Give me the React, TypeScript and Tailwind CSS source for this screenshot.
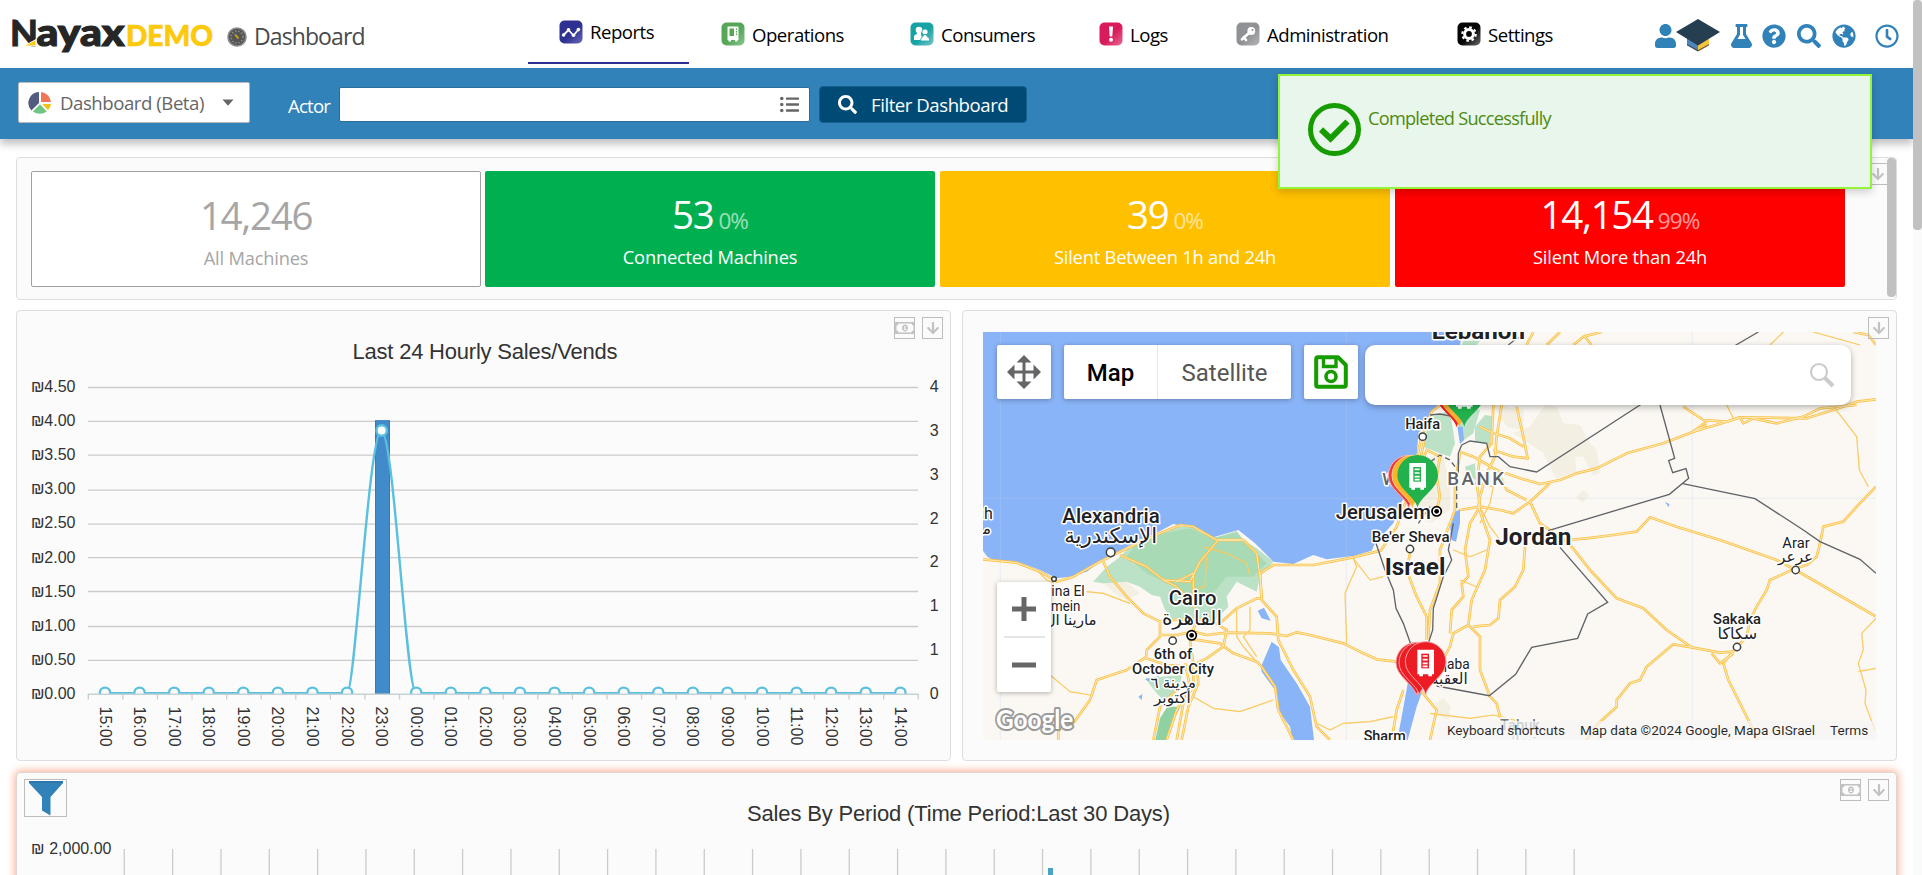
import React from "react";
import {
  FaUser,
  FaFlask,
  FaQuestionCircle,
  FaSearch,
  FaGlobeAmericas,
  FaRegClock,
  FaListUl,
  FaRegMoneyBillAlt,
  FaArrowDown,
} from "react-icons/fa";

/* ---------- header ---------- */

function Logo() {
  return (
    <svg width="204" height="50" viewBox="10 9 204 50" className="shrink-0 overflow-visible">
      <g fontFamily="Lato, sans-serif" fontWeight="900">
        <text x="10" y="46" fontSize="36" fill="#262626" stroke="#262626" strokeWidth="0.8" textLength="28" lengthAdjust="spacingAndGlyphs">N</text>
        <text x="36.5" y="45.6" fontSize="38" fill="#262626" stroke="#262626" strokeWidth="1.2" textLength="88" lengthAdjust="spacingAndGlyphs">ayax</text>
        <text x="126" y="46" fontSize="28.5" fill="#fdc90d" stroke="#fdc90d" strokeWidth="0.7" textLength="87" lengthAdjust="spacingAndGlyphs">DEMO</text>
      </g>
      <path d="M24 46 L36 39.5 V46 Z" fill="#fdc90d" stroke="#fff" strokeWidth="1" />
    </svg>
  );
}

function Gauge() {
  return (
    <svg width="20" height="20" viewBox="0 0 20 20" className="shrink-0">
      <circle cx="10" cy="10" r="9" fill="#555" stroke="#8b8b8b" strokeWidth="1.6" />
      <circle cx="10" cy="10" r="6" fill="none" stroke="#8d8d8d" strokeWidth="1.5" strokeDasharray="1.4 1.8" />
      <path d="M8 7.5 L11.5 11.5" stroke="#d9a916" strokeWidth="1.6" />
    </svg>
  );
}

type Glyph = "reports" | "operations" | "consumers" | "logs" | "admin" | "settings";

const glyphColors: Record<Glyph, [string, string]> = {
  reports: ["#2e3192", "#6a68b5"],
  operations: ["#55a657", "#8cc490"],
  consumers: ["#17a2a4", "#7cc8cc"],
  logs: ["#d91a5b", "#e56d92"],
  admin: ["#8f9194", "#b4b6b8"],
  settings: ["#050505", "#6c6c6c"],
};

function NavGlyph({ name }: { name: Glyph }) {
  const [base, light] = glyphColors[name];
  return (
    <svg width="24" height="24" viewBox="0 0 24 24" className="shrink-0">
      <defs>
        <linearGradient id={"g-" + name} x1="0.3" y1="0.3" x2="1" y2="1">
          <stop offset="0.35" stopColor={base} />
          <stop offset="1" stopColor={light} />
        </linearGradient>
      </defs>
      <rect x="0.5" y="0.5" width="23" height="23" rx="5" fill={"url(#g-" + name + ")"} />
      {name === "reports" && (
        <g fill="#fff">
          <path d="M4.5 15 L9.5 10 L14.5 15.5 L19.5 9.5" stroke="#fff" strokeWidth="1.8" fill="none" />
          <circle cx="4.6" cy="15" r="1.8" />
          <circle cx="9.5" cy="9.8" r="1.8" />
          <circle cx="14.5" cy="15.3" r="1.8" />
          <circle cx="19.4" cy="9.6" r="1.8" />
        </g>
      )}
      {name === "operations" && (
        <g>
          <path d="M6.5 4.5 H17.5 V18 H16.5 V19.5 H14 V18 H10 V19.5 H7.5 V18 H6.5 Z" fill="#fff" />
          <rect x="8.5" y="6.5" width="4.5" height="7.5" fill={base} />
          <path d="M15.5 6.5 V14" stroke={base} strokeWidth="1.3" strokeDasharray="1.5 1" />
        </g>
      )}
      {name === "consumers" && (
        <g fill="#fff">
          <circle cx="9" cy="8" r="3.3" />
          <path d="M4 18 V15 Q4 12.5 7 12 L7 9 H11 V12 L12.5 18 Z" />
          <g stroke={base} strokeWidth="0.8">
            <circle cx="15" cy="10" r="3.1" />
            <path d="M10.5 19 Q10.5 15.5 13.2 14.2 L13.5 12.5 H16.5 L16.8 14.2 Q20 15.5 20 19 Z" />
          </g>
        </g>
      )}
      {name === "logs" && (
        <g fill="#fff">
          <path d="M10 4.5 H14 L13.3 14.5 H10.7 Z" />
          <circle cx="12" cy="17.7" r="2" />
        </g>
      )}
      {name === "admin" && (
        <g>
          <circle cx="15.3" cy="9" r="3.9" fill="#fff" />
          <circle cx="16.5" cy="8" r="1" fill={base} />
          <path d="M13.3 10.8 L6 17.3 M7.8 15.2 L10 18" stroke="#fff" strokeWidth="2.6" strokeLinecap="round" />
        </g>
      )}
      {name === "settings" && (
        <g fill="none" stroke="#fff">
          <circle cx="12" cy="12" r="4.4" strokeWidth="3" />
          <circle cx="12" cy="12" r="6.7" strokeWidth="2.2" strokeDasharray="2.6 2.66" />
        </g>
      )}
    </svg>
  );
}

function NavItem({ glyph, label, className }: { glyph: Glyph; label: string; className: string }) {
  return (
    <div className={"flex shrink-0 items-center whitespace-nowrap text-[18.6px] tracking-[-0.5px] text-black " + className}>
      <NavGlyph name={glyph} />
      <span className="ml-[7px]">{label}</span>
    </div>
  );
}

function GradCap() {
  return (
    <svg width="44" height="33" viewBox="0 0 44 33" className="shrink-0">
      <path d="M11 18 L22 25 V32.5 L11 26 Z" fill="#4d86bd" />
      <path d="M33 18 L22 25 V32.5 L33 26 Z" fill="#f6c33c" />
      <path d="M11 25 L22 31 V32.6 L11 26.6 Z M33 25 L22 31 V32.6 L33 26.6 Z" fill="#3b3b34" opacity="0.7" />
      <path d="M0 13 L22 0 L44 13 L22 26.5 Z" fill="#263f50" />
    </svg>
  );
}

function Header() {
  return (
    <header className="flex h-[68px] shrink-0 items-center bg-white pl-[10px]">
      <Logo />
      <div className="ml-[13px] mt-[5px] flex w-[301px] shrink-0 items-center">
        <Gauge />
        <span className="ml-[7px] text-[23px] tracking-[-0.9px] text-[#4a4a4a]">Dashboard</span>
      </div>
      <div className="mt-[4px] flex h-[56px] w-[161px] shrink-0 border-b-2 border-[#2e3192] pl-[31px]">
        <NavItem glyph="reports" label="Reports" className="-mt-[6px]" />
      </div>
      <NavItem glyph="operations" label="Operations" className="ml-[32px] mt-px w-[189px]" />
      <NavItem glyph="consumers" label="Consumers" className="mt-px w-[189px]" />
      <NavItem glyph="logs" label="Logs" className="mt-px w-[137px]" />
      <NavItem glyph="admin" label="Administration" className="mt-px w-[221px]" />
      <NavItem glyph="settings" label="Settings" className="mt-px w-[198px]" />
      <div className="mt-[3px] flex shrink-0 items-center text-[#3182b9]">
        <FaUser size={24} className="w-[21px]" />
        <GradCap />
        <FaFlask size={24} className="ml-[10px] w-[23px]" />
        <FaQuestionCircle size={24} className="ml-[9px]" />
        <FaSearch size={24} className="ml-[11px]" />
        <FaGlobeAmericas size={24} className="ml-[11px]" />
        <FaRegClock size={24} className="ml-[19px]" />
      </div>
    </header>
  );
}

/* ---------- filter bar ---------- */

function PieIcon() {
  return (
    <svg width="24" height="24" viewBox="0 0 24 24" className="shrink-0">
      <path d="M11 12 V1 A11 11 0 0 0 3.4 19.5 Z" fill="#525b80" />
      <path d="M13 11 V1 A11 11 0 0 1 23 11 Z" fill="#f27758" />
      <path d="M14.3 13 H23 A11 11 0 0 1 20 19.3 Z" fill="#f3c218" />
      <path d="M12 13.3 L18.8 20.4 A11 11 0 0 1 4.9 20.4 Z" fill="#6fc583" />
    </svg>
  );
}

function FilterBar() {
  return (
    <div className="flex h-[71px] shrink-0 items-start bg-[#3182b9] pl-[18px] shadow-[0_5px_8px_rgba(0,0,0,0.25)]">
      <div className="mt-[14px] flex h-[41px] w-[232px] shrink-0 items-center rounded-[2px] border border-[#b9b9b9] bg-white pl-[9px]">
        <PieIcon />
        <span className="ml-[8px] w-[162px] whitespace-nowrap text-[18.6px] tracking-[-0.45px] text-[#666]">Dashboard (Beta)</span>
        <svg width="12" height="7" viewBox="0 0 12 7" className="shrink-0">
          <path d="M0.5 0.5 H11.5 L6 6.8 Z" fill="#666" />
        </svg>
      </div>
      <span className="ml-[38px] mt-[24px] w-[51px] shrink-0 text-[18.6px] tracking-[-0.8px] text-white">Actor</span>
      <div className="mt-[19px] flex h-[35px] w-[471px] shrink-0 items-center justify-end rounded-[2px] border border-[#2a6c9c] bg-white pr-[10px] text-[#666]">
        <FaListUl size={19} />
      </div>
      <button className="ml-[9px] mt-[18px] flex h-[37px] w-[208px] shrink-0 items-center rounded-[4px] border border-[#175f91] bg-[#004b75] pl-[18px] text-white">
        <FaSearch size={19} />
        <span className="ml-[14px] whitespace-nowrap text-[18.6px] tracking-[-0.45px]">Filter Dashboard</span>
      </button>
    </div>
  );
}

/* ---------- status cards ---------- */

function StatCard({ value, pct, label, className }: { value: string; pct?: string; label: string; className: string }) {
  return (
    <div className={"flex h-[116px] w-[450px] shrink-0 flex-col items-center rounded-[2px] pt-[15px] " + className}>
      <div className="flex h-[56px] items-baseline text-[38.5px] leading-[56px] tracking-[-1.3px]">
        <span>{value}</span>
        {pct && <span className="ml-[5px] text-[22.5px] tracking-[-0.9px] opacity-60">{pct}</span>}
      </div>
      <div className="text-[18.3px] leading-[30px] tracking-[-0.2px]">{label}</div>
    </div>
  );
}

function ToolButton({ kind }: { kind: "down" | "money" }) {
  return (
    <div className="flex h-[22px] w-[21px] items-center justify-center border border-[#bdbdbd] text-[#c2c2c2]">
      {kind === "down" ? <FaArrowDown size={14} /> : <FaRegMoneyBillAlt size={20} className="shrink-0" />}
    </div>
  );
}

function StatusPanel() {
  return (
    <section className="relative mx-[16px] mt-[18px] flex h-[143px] shrink-0 rounded-[4px] border border-[#dedede] bg-[#fbfbfb] pl-[14px] pt-[13px]">
      <div className="flex h-[116px] w-[1814px] gap-[5px]">
        <StatCard value="14,246" label="All Machines" className="-mr-px border border-[#a0a0a0] bg-white text-[#a6a6a6]" />
        <StatCard value="53" pct="0%" label="Connected Machines" className="bg-[#00b050] text-white" />
        <StatCard value="39" pct="0%" label="Silent Between 1h and 24h" className="bg-[#ffc000] text-white" />
        <StatCard value="14,154" pct="99%" label="Silent More than 24h" className="bg-[#ff0000] text-white" />
      </div>
      <div className="absolute right-[8px] top-[5px]">
        <ToolButton kind="down" />
      </div>
      <div className="absolute right-0 top-0 h-[139px] w-[9px] rounded-[4px] bg-[#c1c1c1]" />
    </section>
  );
}

/* ---------- hourly chart ---------- */

const moneyLabels = ["4.50", "4.00", "3.50", "3.00", "2.50", "2.00", "1.50", "1.00", "0.50", "0.00"];
const countLabels = ["4", "3", "3", "2", "2", "1", "1", "0"];
const hours = Array.from({ length: 24 }, (_, i) => String((15 + i) % 24).padStart(2, "0") + ":00");
const gridY = [387.5, 421.3, 455.2, 490.2, 524.2, 557.7, 591.5, 626.5, 660.3];

function HourlyChart() {
  const px = (i: number) => 105 + i * 34.58;
  return (
    <svg width="933" height="449" viewBox="17 311 933 449" fontFamily="'Liberation Sans', Arial, sans-serif">
      <defs>
        <clipPath id="plot">
          <rect x="88" y="380" width="830" height="314" />
        </clipPath>
      </defs>
      <text x="485" y="359" textAnchor="middle" fontSize="22" fill="#333" textLength="265">Last 24 Hourly Sales/Vends</text>
      {gridY.map((y) => (
        <line key={y} x1="88" x2="918" y1={y} y2={y} stroke="#cbcbcb" strokeWidth="1.3" />
      ))}
      <g fontSize="16" fill="#333">
        {moneyLabels.map((t, i) => (
          <g key={t}>
            <text x="75.5" y={392 + i * 34.1} textAnchor="end">{t}</text>
            <text x="31" y={392 + i * 34.1} textLength="13.5" lengthAdjust="spacingAndGlyphs">₪</text>
          </g>
        ))}
        {countLabels.map((t, i) => (
          <text key={i} x="934.3" y={392 + i * 43.85} textAnchor="middle">{t}</text>
        ))}
        {hours.map((t, i) => (
          <text key={t} transform={"translate(" + (px(i) - 5.5) + " 706.5) rotate(90)"}>{t}</text>
        ))}
      </g>
      <rect x="375.5" y="420.7" width="14" height="273.3" fill="#428bca" stroke="#3a79b8" strokeWidth="1" />
      <g clipPath="url(#plot)" fill="none" stroke="#5bc0de" strokeWidth="2.4">
        <path d={"M" + px(0) + " 693.3 H" + px(7) + " C355 693 369 430.5 381.3 430.5 C394 430.5 406 693 416.2 693.3 H" + px(23)} />
        {hours.map((t, i) => (
          <circle key={t} cx={px(i)} cy={i === 8 ? 430.5 : 692.8} r="5.2" fill={i === 8 ? "#fff" : "#fbfbfb"} />
        ))}
      </g>
      <line x1="88" x2="918.5" y1="694.3" y2="694.3" stroke="#c6d3d6" strokeWidth="1.6" />
      {Array.from({ length: 25 }, (_, i) => (
        <line key={i} x1={88.3 + i * 34.58} x2={88.3 + i * 34.58} y1="694" y2="699.5" stroke="#ccc" strokeWidth="1.3" />
      ))}
    </svg>
  );
}

/* ---------- map ---------- */

const majorRoads = [
  "69,748 170,758 240,785 290,815 340,800 420,755 480,725 600,670 660,645 700,650 770,690 850,690 890,730 900,800 905,870 950,920 955,990 1000,1080 1050,1160 1070,1250 1110,1290",
  "900,790 940,765 1060,765 1180,742 1262,722 1310,650 1350,540 1372,440 1382,390 1415,305 1440,285",
  "1395,380 1385,430 1370,500 1400,420 1440,440 1430,500 1440,560 1430,600",
  "430,755 450,800 500,860 550,910 600,935 600,980 560,1020 558,1045 620,1065 690,1070 740,1045 790,1010 800,960 760,935 700,925 640,930 600,935",
  "600,975 650,975 700,965 740,975 800,968 930,970 980,978 1010,967 1050,975 1150,1000 1200,1025 1250,1048 1310,1055",
  "700,988 780,1000 820,1030 890,1055 905,1070 945,1130 955,1200 1000,1290",
  "780,940 830,895 890,865 905,865 900,790",
  "480,735 560,770 610,810 650,830 700,880 710,930 690,990 700,1060 700,1130 670,1180 650,1290",
  "610,810 690,815 720,755 775,690 850,690",
  "700,880 700,790 650,815",
  "675,1060 690,1130 650,1200 620,1290",
  "710,1060 715,1120 685,1190 665,1290",
  "660,1130 600,1190 580,1290",
  "560,1040 500,1080 410,1110 390,1170 340,1240 295,1260 295,1290",
  "1350,730 1340,780 1370,860 1400,920 1400,990",
  "1500,430 1485,520 1485,600 1440,720 1440,820 1410,900 1405,990",
  "1625,285 1610,380 1605,440 1580,490 1560,560 1555,590 1590,690 1575,780 1535,870 1525,945 1480,970 1470,1010 1420,1100",
  "1600,285 1595,400 1560,440 1550,520 1560,590 1530,640 1515,720 1525,800 1505,820 1510,860 1475,900 1470,970",
  "1525,945 1560,980 1560,1080 1590,1160 1610,1180 1630,1260",
  "1695,710 1690,780 1665,830 1620,870 1615,925 1590,945 1540,950",
  "1610,480 1680,505 1740,522 1800,510 1850,490 1910,475 2000,430 2110,400 2200,365 2245,330",
  "2170,290 2230,330 2300,335 2340,322 2540,325 2620,300 2690,275 2748,268",
  "2240,345 2200,365 2290,338 2340,322 2350,340 2380,325 2450,340 2530,320 2580,295 2690,285",
  "1500,600 1560,590 1620,600 1660,610 1710,575 1770,520",
  "1710,575 1740,640 1800,680 1835,710 1890,780 1970,865 2050,895 2120,960 2195,1012 2280,1028 2320,1025",
  "1820,690 1880,685 1960,675 2030,665 2070,622 2150,650 2280,690 2380,725 2450,750 2507,780 2748,920",
  "2748,530 2690,590 2650,635 2590,650 2580,700 2570,740 2540,765 2507,775 2430,810 2420,840 2390,890 2370,930 2360,980 2310,1035 2290,1060 2305,1110 2370,1240 2390,1290",
  "2320,1030 2280,1060 2255,1030",
  "2195,1012 2140,1003 2060,1070 2040,1110 2010,1120 1970,1170 1970,1190 1910,1245 1880,1290",
  "1720,66 1700,105",
  "1760,105 1800,66",
  "1840,105 1870,80 1925,66",
  "1870,75 1895,105",
  "2680,66 2725,75 2748,105",
  "1670,290 1690,380 1703,445 1660,440 1600,420",
  "1560,350 1600,370 1650,385 1690,410",
  "1500,425 1540,440 1610,480 1640,540 1700,570",
  "1385,1145 1430,1200 1410,1290",
  "1330,1140 1310,1200 1295,1290",
];

const minorRoads = [
  "380,845 430,850 510,880",
  "270,1095 330,1145 390,1155",
  "700,1160 760,1195 840,1205 940,1170",
  "1070,1240 1110,1260 1150,1240 1230,1235 1300,1220",
  "1180,745 1190,770 1155,850 1160,1000",
  "1180,745 1230,810 1270,800",
  "730,710 800,730 860,760 870,800",
  "740,740 735,830 700,840",
  "830,895 830,980 850,1010 885,1050",
  "870,890 870,960 850,980 890,1040",
  "2625,295 2690,380 2698,480 2725,530",
  "2748,925 2705,970 2710,1020 2695,1060 2718,1140 2715,1180 2745,1260",
  "2695,1085 2748,1075",
  "2430,105 2470,66",
  "2560,66 2700,105",
  "2300,285 2320,325",
  "1410,1210 1530,1225 1600,1215 1700,1240",
  "1480,720 1530,740 1580,720",
  "1500,810 1550,830",
  "1540,520 1600,530 1590,580 1560,640",
  "1560,590 1590,650 1620,690",
  "230,780 260,810 282,820",
];

const borders = [
  "2395,66 2328,105 2040,285 1730,486 1650,470 1615,440 1590,440 1580,400 1530,393 1505,405",
  "2100,285 2144,445 2126,452 2138,488 2178,476 2186,505 2128,553 1765,662",
  "2168,521 2385,566 2530,660 2580,695 2700,748 2748,790",
  "1800,712 1943,877 1883,912 1853,985 1715,1012 1667,1093 1588,1157 1430,1128",
  "1248,700 1275,780 1300,840 1308,895 1330,940 1355,1010",
  "1480,640 1465,720 1475,750 1450,800 1420,895 1418,960 1405,1000",
  "1505,405 1495,430 1495,500",
  "1410,315 1440,312 1480,320",
  "1645,105 1670,85 1690,80",
];

function Roads({ lines, outer, inner }: { lines: string[]; outer: number; inner: number }) {
  return (
    <g fill="none" strokeLinejoin="round">
      {lines.map((p) => (
        <polyline key={p} points={p} stroke="#fac24a" strokeWidth={outer} />
      ))}
      {lines.map((p) => (
        <polyline key={p} points={p} stroke="#fdeab8" strokeWidth={inner} />
      ))}
    </g>
  );
}

type LabelProps = { x: number; y: number; size: number; w?: number; weight?: number; fill?: string; children: string };

function MapLabel({ x, y, size, w, weight = 500, fill = "#202124", children }: LabelProps) {
  return (
    <text
      x={x}
      y={y}
      fontSize={size}
      fontWeight={weight}
      fill={fill}
      textAnchor="middle"
      textLength={w}
      lengthAdjust="spacingAndGlyphs"
      stroke="#fff"
      strokeWidth="9"
      strokeLinejoin="round"
      paintOrder="stroke"
    >
      {children}
    </text>
  );
}

function Town({ x, y, r = 11 }: { x: number; y: number; r?: number }) {
  return <circle cx={x} cy={y} r={r} fill="#fff" stroke="#3c4043" strokeWidth="4.5" />;
}

function Capital({ x, y }: { x: number; y: number }) {
  return (
    <g>
      <circle cx={x} cy={y} r="14" fill="#fff" stroke="#000" strokeWidth="5" />
      <circle cx={x} cy={y} r="7" fill="#000" />
    </g>
  );
}

const pinPath = "M0 0 C-8 -34 -61 -56 -61 -97 A61 61 0 0 1 61 -97 C61 -56 8 -34 0 0 Z";

function Pin({ x, y, fill, edge, machine }: { x: number; y: number; fill: string; edge?: string; machine?: boolean }) {
  return (
    <g transform={"translate(" + x + " " + y + ")"}>
      <path d={pinPath} fill={fill} stroke={edge} strokeWidth="3" />
      {machine && (
        <g>
          <path d="M-25 -134 H25 V-60 H19 V-54 H8 V-60 H-8 V-54 H-19 V-60 H-25 Z" fill="#fff" />
          <rect x="-13" y="-122" width="23" height="44" fill={fill} />
          <path d="M-9 -115 H6 M-9 -104 H6 M-9 -93 H6 M-9 -84 H6" stroke="#fff" strokeWidth="5" />
        </g>
      )}
    </g>
  );
}

function MapCanvas() {
  return (
    <svg width="893" height="408" viewBox="69 66 2679 1224" fontFamily="Roboto, 'Noto Sans', 'DejaVu Sans', sans-serif">
      <rect x="69" y="66" width="2679" height="1224" fill="#fbf8f3" />
      <path
        d="M69 66 H1508 L1500 105 L1430 290 L1408 312 L1398 345 L1375 370 L1370 440 L1340 540 L1300 640 L1245 700 L1235 722 L1180 738 L1100 748 L1060 735 L1000 762 L940 755 L885 700 L835 660 L760 682 L690 652 L640 642 L590 668 L520 700 L475 725 L420 755 L380 785 L330 800 L290 805 L240 780 L180 758 L100 750 L82 740 L69 722 Z"
        fill="#8ab4f8"
      />
      <g fill="#bbe2c6">
        <path d="M475 745 L530 690 L600 668 L640 650 L690 650 L760 685 L830 662 L850 690 L890 715 L940 755 L900 800 L890 845 L830 815 L800 860 L805 890 L760 935 L700 945 L640 930 L615 900 L600 860 L575 855 L540 830 L500 815 L440 822 L400 815 L440 770 Z" />
        <path d="M555 1105 L665 1095 L660 1130 L620 1180 L590 1150 Z" />
        <path d="M1408 325 L1470 300 L1485 400 L1470 440 L1440 430 L1390 410 Z" />
        <path d="M1575 315 L1597 318 L1590 405 L1545 395 L1545 350 Z" />
        <path d="M1515 470 L1545 460 L1548 510 L1520 495 Z" />
        <path d="M1510 92 H1560 L1550 105 H1505 Z" />
        <path d="M1480 285 L1560 300 L1540 370 L1505 395 Z" />
      </g>
      <path d="M530 700 L600 672 L690 655 L755 685 L830 668 L870 710 L920 760 L880 800 L800 800 L760 850 L700 880 L640 830 L560 790 L500 740 Z" fill="#a8dab5" />
      <path d="M622 1190 L662 1190 L640 1230 L622 1290 H586 L600 1225 Z" fill="#8fd1a3" />
      <g fill="#f3efe2">
        <path d="M1660 370 L1710 350 L1755 285 L1790 290 L1810 340 L1860 345 L1890 400 L1910 420 L1922 490 L1900 497 L1870 440 L1845 440 L1850 485 L1790 505 L1765 460 L1750 430 L1700 395 Z" />
        <path d="M1848 560 L1870 540 L1888 556 L1868 578 Z" />
        <path d="M1600 285 L1690 300 L1690 360 L1640 350 Z" />
        <path d="M430 820 L500 815 L540 850 L500 870 L470 855 Z" />
        <path d="M1428 1180 L1450 1165 L1472 1190 L1465 1230 L1430 1215 Z" />
        <path d="M1380 440 L1450 440 L1470 520 L1470 600 L1410 640 L1350 600 Z" />
      </g>
      <g fill="#8ab4f8">
        <path d="M903 1070 L935 995 L957 1012 L962 1050 L1010 1120 L1050 1190 L1062 1290 H998 L990 1250 L950 1195 L945 1140 L905 1085 Z" />
        <path d="M893 902 L912 893 L932 932 L905 925 Z" />
        <path d="M1345 1110 L1390 1135 L1370 1190 L1343 1290 H1312 L1325 1220 Z" />
        <path d="M1480 608 L1500 598 L1500 640 L1488 695 L1474 690 L1470 645 Z" />
        <path d="M1492 350 L1508 350 L1512 390 L1500 402 Z" />
        <path d="M555 1108 L598 1098 L590 1106 L565 1113 Z M535 1160 L547 1152 L545 1170 Z M2115 575 L2128 582 L2126 592 Z" />
      </g>
      <path d="M121 66 V1290 M1159 66 V1290 M2197 66 V1290 M69 565 H2748" stroke="#bcd0ee" strokeWidth="2" opacity="0.4" />
      <Roads lines={minorRoads} outer={3.5} inner={0.8} />
      <Roads lines={majorRoads} outer={8} inner={3} />
      <g fill="none" stroke="#5f6368" strokeWidth="4">
        {borders.map((p) => (
          <polyline key={p} points={p} />
        ))}
        <path d="M1390 470 L1440 435 L1470 450 L1485 470 M1490 500 V600 M1375 640 L1410 590" strokeDasharray="16 10" />
      </g>

      <MapLabel x={1555} y={86} size={68} w={280} weight={700}>Lebanon</MapLabel>
      <MapLabel x={1388} y={358} size={46} w={105}>Haifa</MapLabel>
      <Town x={1388} y={380} />
      <MapLabel x={1335} y={526} size={52} w={136} fill="#5f6368">WEST</MapLabel>
      <text x="1462" y="526" fontSize="56" fontWeight="500" fill="#5f6368" textLength="170" stroke="#fff" strokeWidth="9" paintOrder="stroke">BANK</text>
      <MapLabel x={1270} y={627} size={59} w={286}>Jerusalem</MapLabel>
      <MapLabel x={1352} y={695} size={46} w={234}>Be&#39;er Sheva</MapLabel>
      <Town x={1350} y={717} />
      <MapLabel x={1365} y={796} size={71} w={182} weight={700}>Israel</MapLabel>
      <MapLabel x={1720} y={705} size={71} w={228} weight={700}>Jordan</MapLabel>
      <MapLabel x={453} y={639} size={59} w={292}>Alexandria</MapLabel>
      <MapLabel x={452} y={698} size={64}>الإسكندرية</MapLabel>
      <Town x={452} y={727} r={13} />
      <MapLabel x={72} y={628} size={48} weight={400}>uh</MapLabel>
      <MapLabel x={74} y={672} size={46} weight={400}>مـ</MapLabel>
      <MapLabel x={698} y={885} size={61} w={143}>Cairo</MapLabel>
      <MapLabel x={696} y={944} size={60}>القاهرة</MapLabel>
      <Capital x={695} y={976} />
      <Town x={638} y={992} />
      <MapLabel x={639} y={1048} size={45} w={115}>6th of</MapLabel>
      <MapLabel x={639} y={1092} size={45} w={246}>October City</MapLabel>
      <MapLabel x={640} y={1134} size={46}>مدينة ٦</MapLabel>
      <MapLabel x={637} y={1179} size={46}>أكتوبر</MapLabel>
      <MapLabel x={324} y={858} size={45} w={100} weight={400}>ina El</MapLabel>
      <MapLabel x={317} y={902} size={45} w={88} weight={400}>mein</MapLabel>
      <MapLabel x={332} y={946} size={45} weight={400}>مارينا ال</MapLabel>
      <Town x={282} y={807} r={7} />
      <MapLabel x={2508} y={714} size={45} w={82} weight={400}>Arar</MapLabel>
      <MapLabel x={2507} y={756} size={46} weight={400}>عرعر</MapLabel>
      <Town x={2507} y={780} />
      <MapLabel x={2331} y={943} size={45} w={144}>Sakaka</MapLabel>
      <MapLabel x={2332} y={986} size={48}>سكاكا</MapLabel>
      <Town x={2331} y={1011} />
      <MapLabel x={1470} y={1077} size={45} w={118} weight={400}>Aqaba</MapLabel>
      <MapLabel x={1468} y={1121} size={46} weight={400}>العقبة</MapLabel>
      <MapLabel x={1274} y={1293} size={45} w={126}>Sharm</MapLabel>
      <MapLabel x={1680} y={1260} size={45} w={120} fill="#77797c">Tabuk</MapLabel>
      <MapLabel x={1685} y={1303} size={45} fill="#77797c">تبوك</MapLabel>
      <Capital x={1430} y={604} />

      <Pin x={1490} y={352} fill="#ed1c24" />
      <Pin x={1498} y={352} fill="#fbb034" />
      <Pin x={1513} y={350} fill="#22b14c" machine />
      <Pin x={1346} y={594} fill="#ed3b42" edge="#f9b1b3" />
      <Pin x={1357} y={594} fill="#f9b429" edge="#fbd58b" />
      <Pin x={1373} y={593} fill="#22b14c" machine />
      <Pin x={1369} y={1155} fill="#ed1c24" edge="#f7a3a6" />
      <Pin x={1378} y={1155} fill="#ed1c24" edge="#f7a3a6" />
      <Pin x={1397} y={1153} fill="#ed1c24" edge="#f7a3a6" machine />

      <text x="108" y="1257" fontFamily="Lato, sans-serif" fontWeight="700" fontSize="80" textLength="232" lengthAdjust="spacingAndGlyphs" fill="#fff" stroke="#9a9a9a" strokeWidth="12" strokeLinejoin="round" paintOrder="stroke">
        Google
      </text>
    </svg>
  );
}

const controlBox = "absolute rounded-[2px] bg-white shadow-[0_1px_5px_rgba(0,0,0,0.3)] ";

function MapPanel() {
  return (
    <section className="relative h-[451px] w-[935px] shrink-0 rounded-[4px] border border-[#dedede] bg-[#fbfbfb] pl-[20px] pt-[21px]">
      <div className="relative h-[408px] w-[893px] overflow-hidden font-[Roboto,sans-serif]">
        <MapCanvas />
        <div className={controlBox + "left-[14px] top-[13px] flex h-[54px] w-[54px] items-center justify-center"}>
          <svg width="36" height="36" viewBox="0 0 36 36" fill="#666">
            <path d="M18 1 L25.5 8.5 H10.5 Z M18 35 L25.5 27.5 H10.5 Z M1 18 L8.5 10.5 V25.5 Z M35 18 L27.5 10.5 V25.5 Z" />
            <path d="M16.5 8 H19.5 V28 H16.5 Z M8 16.5 H28 V19.5 H8 Z" />
          </svg>
        </div>
        <div className={controlBox + "left-[81px] top-[13px] flex h-[54px] w-[227px] items-center text-[24px]"}>
          <div className="flex h-full w-[94px] items-center justify-center border-r border-[#e6e6e6] pt-px font-medium text-black">Map</div>
          <div className="flex h-full flex-1 items-center justify-center pt-px text-[#565656]">Satellite</div>
        </div>
        <div className={controlBox + "left-[321px] top-[13px] flex h-[54px] w-[54px] items-center justify-center"}>
          <svg width="34" height="34" viewBox="0 0 34 34" fill="none" stroke="#179c00" strokeWidth="4">
            <path d="M4 2.2 H24 L31.8 10 V30 Q31.8 31.8 30 31.8 H4 Q2.2 31.8 2.2 30 V4 Q2.2 2.2 4 2.2 Z" strokeLinejoin="round" />
            <path d="M9.5 3 V11.5 H22 V3" strokeWidth="3.4" />
            <circle cx="17" cy="21.5" r="5" strokeWidth="3.6" />
          </svg>
        </div>
        <div className="absolute left-[382px] top-[13px] flex h-[60px] w-[486px] items-center justify-end rounded-[10px] bg-white pr-[16px] shadow-[0_2px_6px_rgba(0,0,0,0.3)]">
          <svg width="26" height="26" viewBox="0 0 26 26" fill="none" stroke="#cbcbcb">
            <circle cx="10" cy="10" r="8" strokeWidth="2.2" />
            <path d="M15.5 15.5 L24 24" strokeWidth="4" />
          </svg>
        </div>
        <div className={controlBox + "left-[14px] top-[250px] flex h-[110px] w-[54px] flex-col items-center"}>
          <div className="flex h-[54px] items-center">
            <svg width="24" height="24" viewBox="0 0 24 24">
              <path d="M12 0 V24 M0 12 H24" stroke="#666" strokeWidth="5" />
            </svg>
          </div>
          <div className="h-[2px] w-[41px] bg-[#e6e6e6]" />
          <div className="flex h-[54px] items-center">
            <svg width="24" height="6" viewBox="0 0 24 6">
              <path d="M0 3 H24" stroke="#666" strokeWidth="5" />
            </svg>
          </div>
        </div>
        <div className="absolute bottom-0 right-0 flex h-[19px] w-[438px] items-center whitespace-nowrap bg-[#f5f5f5]/70 pl-[9px] text-[13.6px] text-black/85">
          <span className="w-[133px]">Keyboard shortcuts</span>
          <span className="w-[250px]">Map data ©2024 Google, Mapa GISrael</span>
          <span>Terms</span>
        </div>
      </div>
      <div className="absolute right-[7px] top-[6px]">
        <ToolButton kind="down" />
      </div>
    </section>
  );
}

/* ---------- sales by period ---------- */

function SalesPanel() {
  return (
    <section className="relative mx-[16px] mt-[11px] h-[300px] shrink-0 rounded-[4px] border border-[#dcd5d2] bg-[#fbfbfb] shadow-[0_0_8px_1px_#ffa98c]">
      <svg width="1879" height="102" viewBox="17 773 1879 102" fontFamily="'Liberation Sans', Arial, sans-serif">
        <text x="958.5" y="821" textAnchor="middle" fontSize="22" fill="#333" textLength="423">Sales By Period (Time Period:Last 30 Days)</text>
        <text x="31" y="854" fontSize="16" fill="#333" textLength="13.5" lengthAdjust="spacingAndGlyphs">₪</text>
        <text x="111.5" y="854" fontSize="16" fill="#333" textAnchor="end">2,000.00</text>
        {Array.from({ length: 31 }, (_, i) => (
          <line key={i} x1={124.3 + i * 48.33} x2={124.3 + i * 48.33} y1="849" y2="876" stroke="#cbcbcb" strokeWidth="1.3" />
        ))}
        <rect x="1048" y="868" width="5" height="10" fill="#4ba3c3" />
      </svg>
      <div className="absolute left-[7px] top-[6px] flex h-[38px] w-[43px] items-center justify-center border border-[#bdbdbd]">
        <svg width="34" height="35" viewBox="0 0 34 35">
          <path d="M0 0 H34 V2 L21.5 16 V34.5 L13 29.5 V16 L0 2 Z" fill="#3182b9" />
          <path d="M0 1 H34" stroke="#2a6b99" strokeWidth="1" />
        </svg>
      </div>
      <div className="absolute right-[7px] top-[6px] flex gap-[7px]">
        <ToolButton kind="money" />
        <ToolButton kind="down" />
      </div>
    </section>
  );
}

/* ---------- toast ---------- */

function Toast() {
  return (
    <div className="absolute left-[1278px] top-[74px] flex h-[115px] w-[594px] border-2 border-[#93f53a] bg-[#e9f6ec] pl-[28px] pt-[27px] shadow-[0_3px_8px_rgba(0,0,0,0.18)]">
      <svg width="53" height="53" viewBox="0 0 53 53" fill="none" stroke="#179c00" className="shrink-0">
        <circle cx="26.5" cy="26.5" r="24" strokeWidth="5" />
        <path d="M13 26.5 L22.5 35.5 L39.5 18.5" strokeWidth="6" />
      </svg>
      <span className="ml-[7px] mt-px whitespace-nowrap text-[18.2px] leading-[28px] tracking-[-0.75px] text-[#4f8a10]">Completed Successfully</span>
    </div>
  );
}

export default function App() {
  return (
    <div className="relative flex h-[875px] w-full overflow-hidden bg-white font-['Open_Sans','Noto_Sans',sans-serif]">
      <main className="flex h-full w-[1913px] shrink-0 flex-col overflow-hidden">
        <Header />
        <FilterBar />
        <StatusPanel />
        <div className="mx-[16px] mt-[10px] flex shrink-0 gap-[11px]">
          <section className="relative h-[451px] w-[935px] shrink-0 rounded-[4px] border border-[#dedede] bg-[#fbfbfb]">
            <HourlyChart />
            <div className="absolute right-[7px] top-[6px] flex gap-[7px]">
              <ToolButton kind="money" />
              <ToolButton kind="down" />
            </div>
          </section>
          <MapPanel />
        </div>
        <SalesPanel />
      </main>
      <aside className="flex-1 bg-[#fafafa]">
        <div className="h-[230px] rounded-[4px] bg-[#c1c1c1]" />
      </aside>
      <Toast />
    </div>
  );
}
